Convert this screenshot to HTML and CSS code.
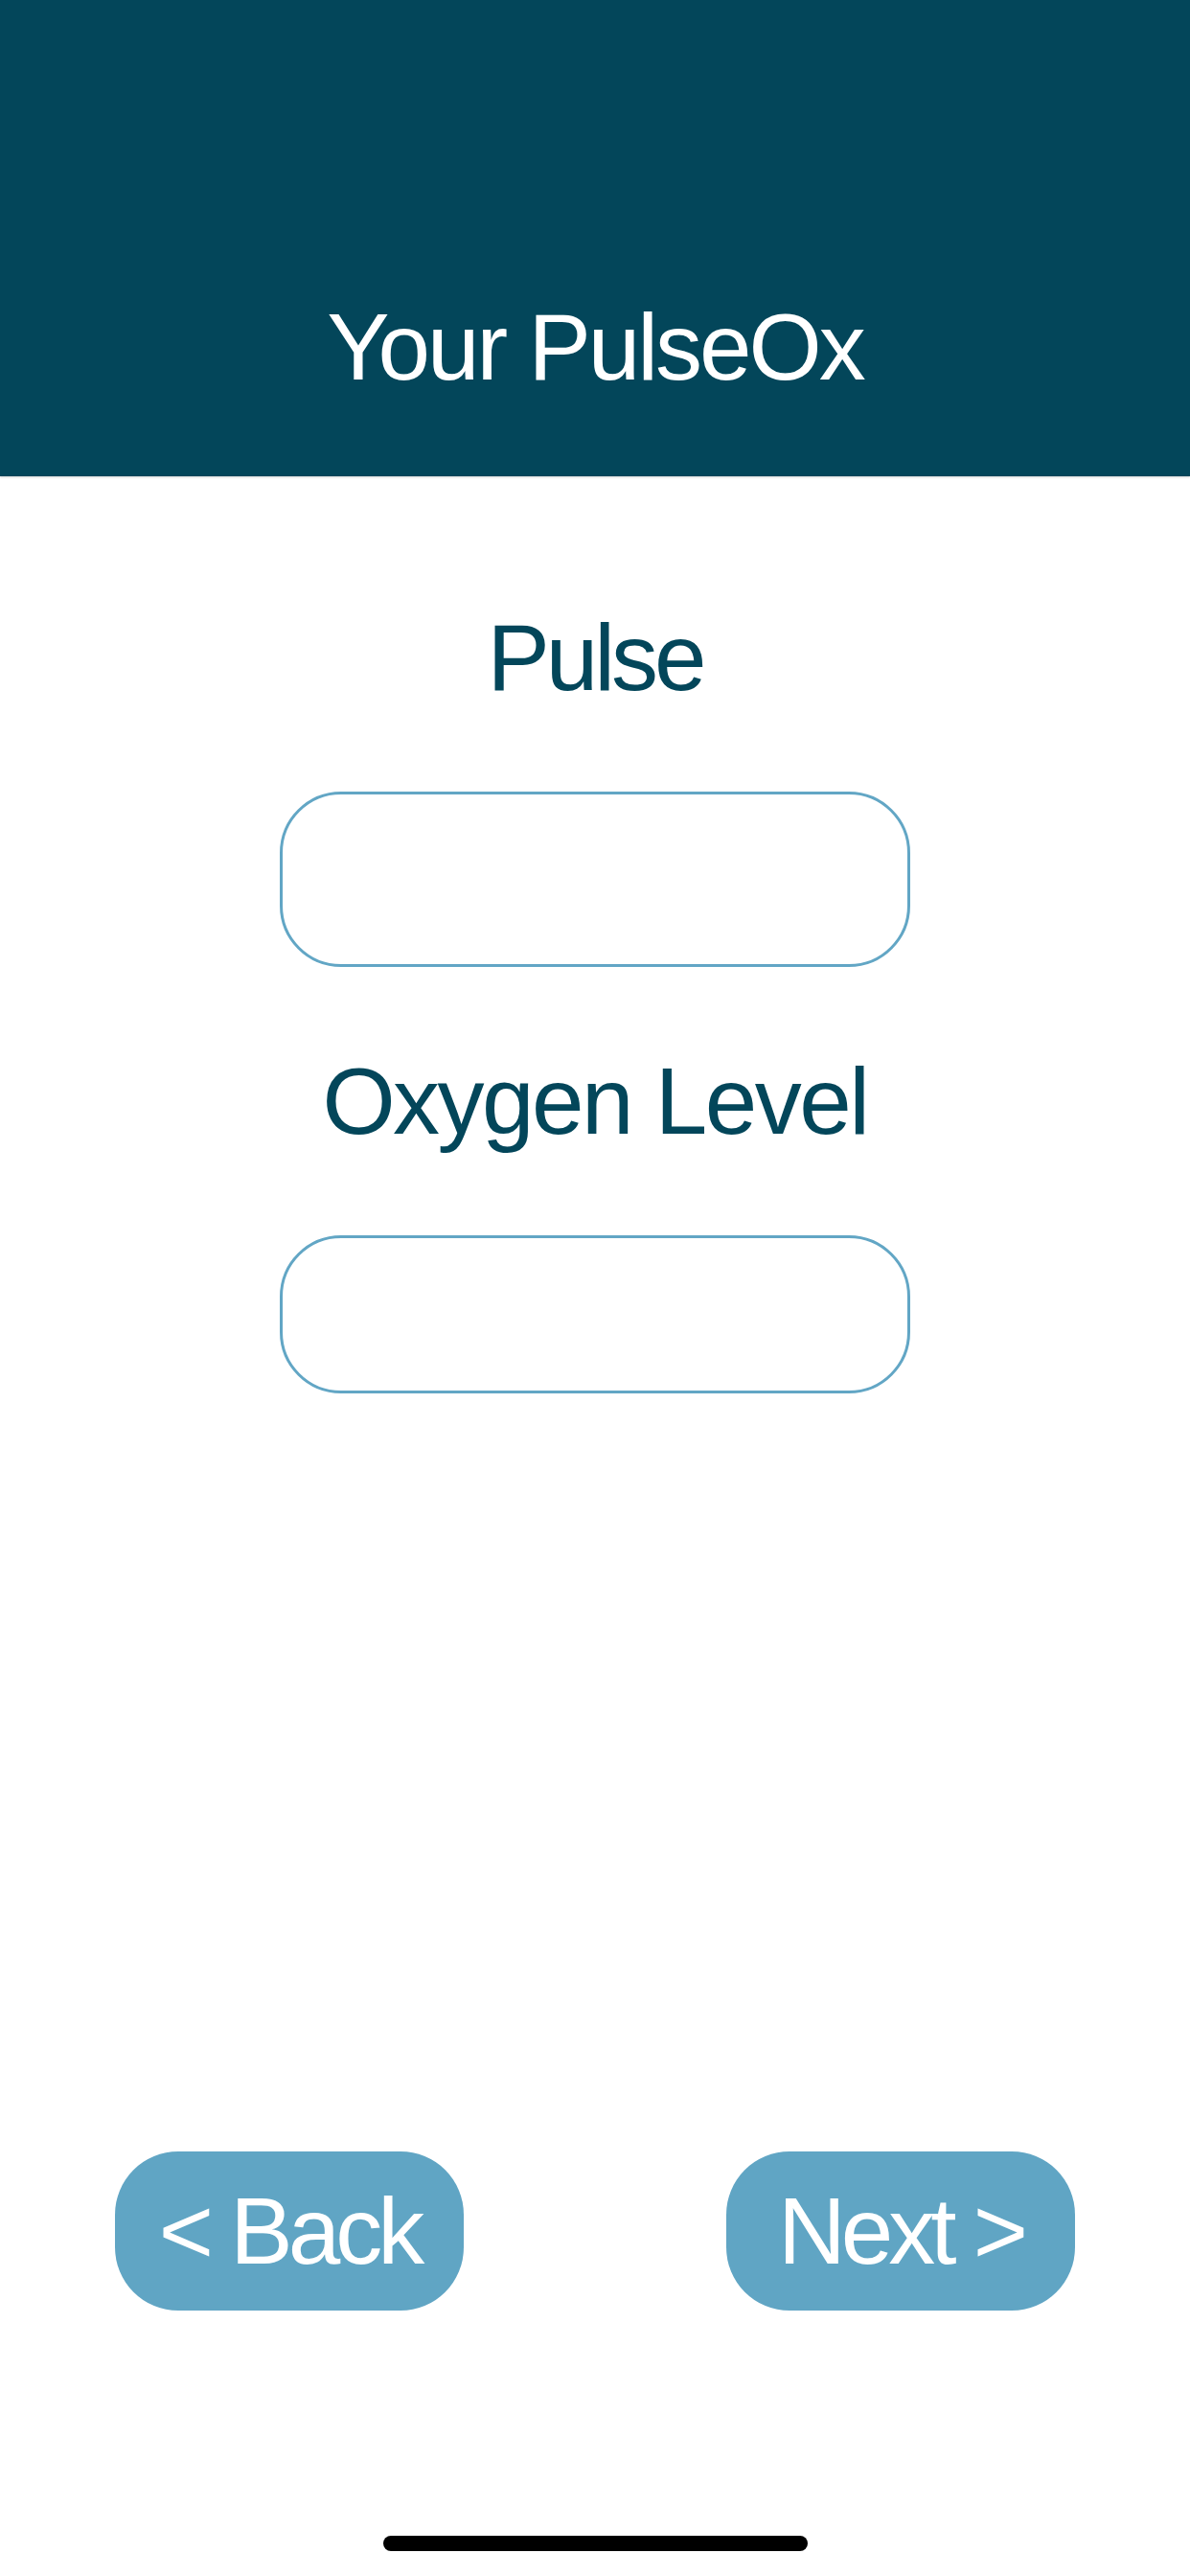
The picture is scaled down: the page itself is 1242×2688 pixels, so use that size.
FILE: index.html
```html
<!DOCTYPE html>
<html lang="en">
<head>
<meta charset="utf-8">
<title>Your PulseOx</title>
<link rel="stylesheet" href="styles.css">
</head>
<body>
<div class="screen">
  <header class="topbar">
    <h1 class="title">Your PulseOx</h1>
  </header>
  <main class="form">
    <label class="label label-pulse" for="pulse">Pulse</label>
    <input class="field field-pulse" id="pulse" type="text">
    <label class="label label-oxygen" for="oxygen">Oxygen Level</label>
    <input class="field field-oxygen" id="oxygen" type="text">
  </main>
  <nav class="actions">
    <button class="btn" type="button">&lt; Back</button>
    <button class="btn" type="button">Next &gt;</button>
  </nav>
  <div class="home-area">
    <div class="home-indicator"></div>
  </div>
</div>
</body>
</html>
```
FILE: styles.css
```css
html, body {
  margin: 0;
  padding: 0;
  background: #ffffff;
}

.screen {
  width: 1242px;
  height: 2688px;
  display: flex;
  flex-direction: column;
  font-family: "Liberation Sans", Arial, sans-serif;
}

.topbar {
  height: 497px;
  box-sizing: border-box;
  background: #03465a;
  display: flex;
  align-items: flex-end;
  justify-content: center;
  padding-bottom: 75px;
  box-shadow: 0 1px 2px rgba(0, 0, 0, 0.18);
}

.title {
  margin: 0;
  font-size: 98px;
  line-height: 120px;
  font-weight: 400;
  color: #ffffff;
  letter-spacing: -3px;
}

.form {
  display: flex;
  flex-direction: column;
  align-items: center;
  padding-top: 129px;
}

.label {
  font-size: 98px;
  line-height: 120px;
  color: #03465a;
  letter-spacing: -2.5px;
}

.label-pulse {
  letter-spacing: -4px;
}

.field {
  display: block;
  width: 658px;
  box-sizing: border-box;
  border: 3px solid #62a6c5;
  border-radius: 64px;
  background: #ffffff;
  outline: none;
  margin: 80px 0;
  padding: 0 40px;
  font-family: inherit;
  font-size: 60px;
}

.field-pulse {
  height: 183px;
}

.field-oxygen {
  height: 165px;
}

.actions {
  margin-top: auto;
  display: flex;
  justify-content: space-between;
  padding: 0 120px;
}

.btn {
  width: 364px;
  height: 166px;
  border: none;
  border-radius: 66px;
  background: #60a5c4;
  color: #ffffff;
  font-family: "Liberation Sans", Arial, sans-serif;
  font-size: 98px;
  letter-spacing: -5px;
  padding: 0;
  display: flex;
  align-items: center;
  justify-content: center;
}

.home-area {
  height: 277px;
  display: flex;
  align-items: flex-end;
  justify-content: center;
  padding-bottom: 26px;
  box-sizing: border-box;
}

.home-indicator {
  width: 443px;
  height: 16px;
  border-radius: 8px;
  background: #000000;
}
```
